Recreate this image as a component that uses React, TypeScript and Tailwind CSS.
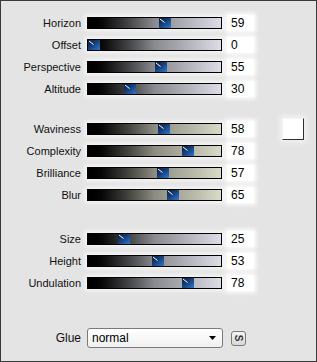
import React from "react";

type Row = { label: string; value: number };

const groups: { rows: Row[]; tint: "blue" | "sand" }[] = [
  {
    tint: "blue",
    rows: [
      { label: "Horizon", value: 59 },
      { label: "Offset", value: 0 },
      { label: "Perspective", value: 55 },
      { label: "Altitude", value: 30 },
    ],
  },
  {
    tint: "sand",
    rows: [
      { label: "Waviness", value: 58 },
      { label: "Complexity", value: 78 },
      { label: "Brilliance", value: 57 },
      { label: "Blur", value: 65 },
    ],
  },
  {
    tint: "blue",
    rows: [
      { label: "Size", value: 25 },
      { label: "Height", value: 53 },
      { label: "Undulation", value: 78 },
    ],
  },
];

function Thumb({ left }: { left: number }) {
  return (
    <svg
      width="12"
      height="10"
      viewBox="0 0 12 10"
      className="absolute top-0"
      style={{ left }}
    >
      <defs>
        <linearGradient id="thumbFill" x1="0" y1="0" x2="1" y2="1">
          <stop offset="0" stopColor="#0b1d38" />
          <stop offset="0.45" stopColor="#163f78" />
          <stop offset="1" stopColor="#2f78d0" />
        </linearGradient>
      </defs>
      <rect x="0" y="0" width="12" height="10" fill="url(#thumbFill)" />
      <line x1="1" y1="1" x2="5.5" y2="4.5" stroke="#ffffff" strokeWidth="1" />
    </svg>
  );
}

function Slider({ value, tint }: { value: number; tint: "blue" | "sand" }) {
  const left = Math.round((value / 100) * 121);
  return (
    <div
      className={
        "relative h-[12px] w-[135px] border border-black shadow-[0_0_4px_2px_rgba(255,255,255,0.7)] " +
        (tint === "blue"
          ? "bg-gradient-to-r from-black via-[#8a8b90] to-[#dcdde7]"
          : "bg-gradient-to-r from-black via-[#8c8c82] to-[#dadac8]")
      }
    >
      <Thumb left={left} />
    </div>
  );
}

function ValueBox({ value }: { value: number }) {
  return (
    <div className="flex h-[16px] w-[27px] items-center bg-white pl-[4px] text-[12px] leading-none text-black shadow-[0_0_4px_2px_rgba(255,255,255,0.9)]">
      {value}
    </div>
  );
}

export default function App() {
  return (
    <div
      className="flex h-[362px] w-[317px] flex-col border border-[#3a3a3a] bg-[#e4e4e4] pt-[11px] text-[11px] text-[#111]"
      style={{ fontFamily: '"Liberation Sans", Arial, sans-serif' }}
    >
      {groups.map((g, gi) => (
        <div
          key={gi}
          className={
            "flex flex-col " + (gi === 1 ? "mt-[18px]" : gi === 2 ? "mt-[22px]" : "")
          }
        >
          {g.rows.map((r) => (
            <div key={r.label} className="flex h-[22px] items-center">
              <span className="w-[80px] pr-[0px] text-right">{r.label}</span>
              <div className="ml-[6px]">
                <Slider value={r.value} tint={g.tint} />
              </div>
              <div className="ml-[5px]">
                <ValueBox value={r.value} />
              </div>
              {r.label === "Waviness" && (
                <div className="-mt-[1px] ml-[28px] h-[22px] w-[22px] border border-b-[#303030] border-l-[#f4f4f4] border-r-[#303030] border-t-[#f4f4f4] bg-white shadow-[0_0_5px_2px_rgba(255,255,255,0.6)]" />
              )}
            </div>
          ))}
        </div>
      ))}

      <div className="mt-[34px] flex h-[20px] items-center">
        <span className="w-[80px] text-right text-[12px]">Glue</span>
        <div className="ml-[6px] flex h-[20px] w-[136px] items-center justify-between rounded-[3px] border border-[#7a7a7a] bg-gradient-to-b from-white to-[#f0f0f0] pl-[4px] pr-[6px] text-[12px] text-black">
          <span>normal</span>
          <svg width="7" height="4" viewBox="0 0 7 4">
            <path d="M0 0 L7 0 L3.5 4 Z" fill="#000" />
          </svg>
        </div>
        <div className="ml-[8px] flex h-[15px] w-[15px] items-center justify-center rounded-[3px] border border-[#7a7a7a] bg-gradient-to-b from-[#f4f4f4] to-[#d8d8d8]">
          <span className="rotate-90 text-[10px] font-bold leading-none text-[#333]">S</span>
        </div>
      </div>
    </div>
  );
}
